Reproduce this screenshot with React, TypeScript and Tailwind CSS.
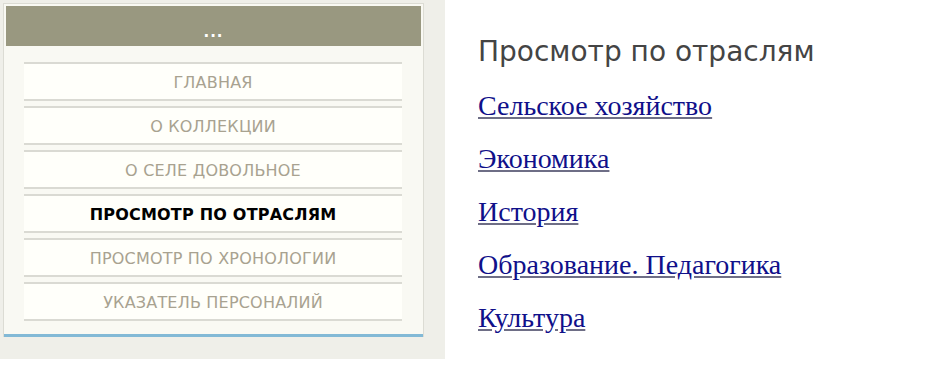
const menu = [
  { label: "Главная" },
  { label: "О коллекции" },
  { label: "О селе Довольное" },
  { label: "Просмотр по отраслям", active: true },
  { label: "Просмотр по хронологии" },
  { label: "Указатель персоналий" },
];

const branches = [
  "Сельское хозяйство",
  "Экономика",
  "История",
  "Образование. Педагогика",
  "Культура",
];

export default function App() {
  return (
    <div className="flex h-[372px] w-[936px] items-start bg-white">
      <div className="h-[359px] w-[445px] bg-[#efefe9] p-[3px]">
        <div className="w-[421px] border border-b-0 border-[#dcdcd4] bg-[#f9f9f3]">
          <div className="p-[2px]">
            <div className="flex h-[40px] items-end justify-center bg-[#999880] pb-[6px] font-['DejaVu_Sans',sans-serif] text-[15px] font-bold leading-none tracking-[1px] text-white">
              ...
            </div>
          </div>
          <ul className="flex flex-col gap-[5px] pl-[20px] pr-[21px] pt-[14px] pb-[13px]">
            {menu.map((m) => (
              <li
                key={m.label}
                className={
                  "flex h-[39px] items-center justify-center border-y-2 border-[#dadad3] bg-[#fffffa] pt-[2px] font-['DejaVu_Sans',sans-serif] text-[16px] tracking-[0.2px] uppercase " +
                  (m.active ? "font-bold text-black" : "text-[#a8a290]")
                }
              >
                {m.label}
              </li>
            ))}
          </ul>
          <div className="h-[3px] bg-[#82b9d6]" />
        </div>
      </div>

      <div className="ml-[33px] pt-[36px]">
        <h2 className="font-['DejaVu_Sans',sans-serif] text-[28px] leading-[32px] text-[#444]">
          Просмотр по отраслям
        </h2>
        <ul className="mt-[22px] flex flex-col gap-[21px]">
          {branches.map((b) => (
            <li key={b} className="font-['Liberation_Serif',serif] text-[28px] leading-[32px]">
              <a href="#" className="text-[#10108a] underline decoration-[#6e6e86]">
                {b}
              </a>
            </li>
          ))}
        </ul>
      </div>
    </div>
  );
}
